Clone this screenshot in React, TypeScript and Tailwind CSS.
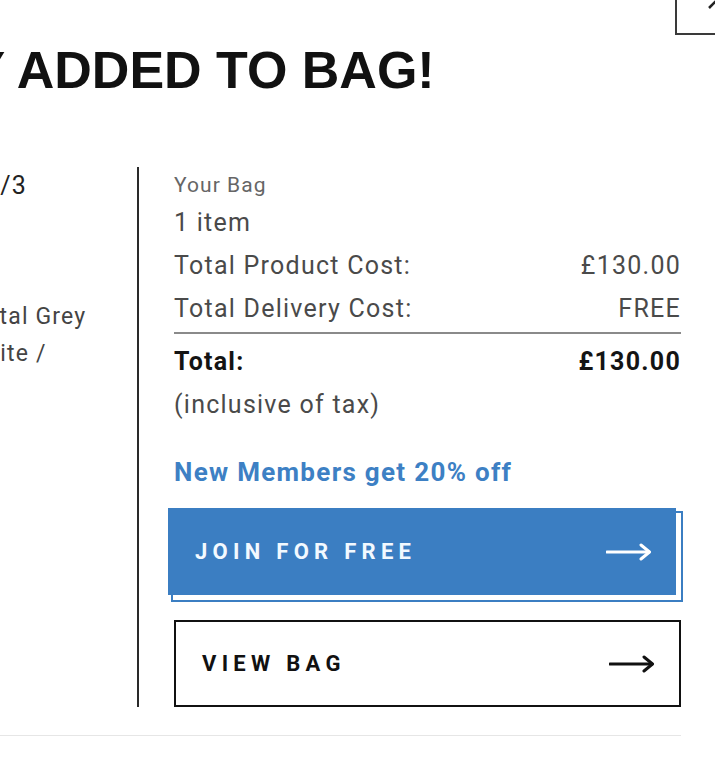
import React from 'react';

const BLUE = '#3b7ec2';

function LongArrow({ color }: { color: string }) {
  return (
    <svg width="46" height="18" viewBox="0 0 46 18" fill="none">
      <line x1="1" y1="9" x2="43" y2="9" stroke={color} strokeWidth="3" strokeLinecap="round" />
      <polyline points="35,2 43.5,9 35,16" stroke={color} strokeWidth="3" strokeLinecap="round" strokeLinejoin="round" fill="none" />
    </svg>
  );
}

function SummaryRow({ label, value, bold }: { label: string; value: string; bold?: boolean }) {
  return (
    <div
      className={`flex items-center justify-between h-[43px] leading-[43px] text-[25px] tracking-[0.05em] ${
        bold ? 'font-bold text-[#141414]' : 'text-[#4a4a4a]'
      }`}
    >
      <span>{label}</span>
      <span>{value}</span>
    </div>
  );
}

export default function App() {
  return (
    <div className="relative w-[715px] h-[777px] overflow-hidden bg-white font-['Roboto',sans-serif]">
      {/* close button, mostly scrolled out of view */}
      <div className="absolute left-[675px] top-[-20px] w-[90px] h-[55px] border-2 border-[#3a3a3a]">
        <svg className="absolute left-[30px] top-[-2px]" width="30" height="30" viewBox="0 0 30 30">
          <line x1="2" y1="28" x2="28" y2="2" stroke="#222" strokeWidth="2.5" />
          <line x1="2" y1="2" x2="28" y2="28" stroke="#222" strokeWidth="2.5" />
        </svg>
      </div>

      {/* Heading */}
      <h1 className="mt-[44px] ml-[-409px] whitespace-nowrap h-[52px] leading-[52px] text-[52px] font-bold text-[#111] font-['Liberation_Sans',Arial,sans-serif]">
        SUCCESSFULLY ADDED TO BAG!
      </h1>

      {/* Main row */}
      <div className="mt-[71px] flex">
        {/* product details, cropped on the left */}
        <div className="w-[137px] overflow-hidden pt-[3px]">
          <div className="ml-[-15px] whitespace-nowrap h-[32px] leading-[32px] text-[25px] tracking-[0.05em] text-[#222]">
            1/3
          </div>
          <div className="mt-[96px] ml-[-35px] whitespace-nowrap h-[37px] leading-[37px] text-[23px] tracking-[0.05em] text-[#444]">
            Metal Grey
          </div>
          <div className="ml-[-107px] whitespace-nowrap h-[37px] leading-[37px] text-[23px] tracking-[0.05em] text-[#444]">
            Cloud White /
          </div>
        </div>

        {/* divider */}
        <div className="w-[2px] bg-[#2a2a2a]" />

        {/* bag summary */}
        <div className="ml-[35px] w-[507px] pt-[2px]">
          <div className="h-[32px] leading-[32px] text-[21px] tracking-[0.05em] text-[#666]">Your Bag</div>
          <div className="h-[43px] leading-[43px] text-[25px] tracking-[0.05em] text-[#4a4a4a]">1 item</div>
          <SummaryRow label="Total Product Cost:" value="£130.00" />
          <SummaryRow label="Total Delivery Cost:" value="FREE" />
          <div className="mt-[2px] h-[2px] bg-[#8a8a8a]" />
          <div className="mt-[6px]">
            <SummaryRow label="Total:" value="£130.00" bold />
          </div>
          <div className="h-[43px] leading-[43px] text-[25px] tracking-[0.05em] text-[#4a4a4a]">(inclusive of tax)</div>

          <div className="mt-[29px] h-[34px] leading-[34px] text-[26px] font-bold tracking-[0.05em] text-[#3d80c4]">
            New Members get 20% off
          </div>

          <button
            className="mt-[19px] ml-[-6px] w-[508px] h-[87px] flex items-center justify-between pl-[27px] pr-[24px] bg-[#3b7ec2] text-[#f2f9ff] text-[22px] font-bold tracking-[0.24em] shadow-[5px_5px_0_0_#ffffff,5px_5px_0_2px_#3b7ec2]"
            style={{ backgroundColor: BLUE }}
          >
            <span>JOIN FOR FREE</span>
            <LongArrow color="#ffffff" />
          </button>

          <button className="mt-[25px] w-[507px] h-[87px] flex items-center justify-between pl-[26px] pr-[24px] border-2 border-[#111] bg-white text-[#111] text-[22px] font-bold tracking-[0.24em]">
            <span>VIEW BAG</span>
            <LongArrow color="#111111" />
          </button>
        </div>
      </div>

      <div className="mt-[28px] w-[681px] h-[1px] bg-[#e6e6e6]" />
    </div>
  );
}
